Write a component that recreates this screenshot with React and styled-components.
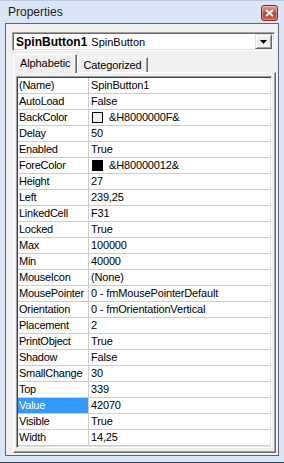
import React from 'react';
import styled, { createGlobalStyle } from 'styled-components';

const GlobalStyle = createGlobalStyle`
  html, body {
    margin: 0;
    padding: 0;
    background: #dae6f5;
  }
  body {
    font-family: "Liberation Sans", Arial, sans-serif;
  }
`;

const props = [
  { name: '(Name)', value: 'SpinButton1' },
  { name: 'AutoLoad', value: 'False' },
  { name: 'BackColor', value: '&H8000000F&', swatch: '#f0f0f0' },
  { name: 'Delay', value: '50' },
  { name: 'Enabled', value: 'True' },
  { name: 'ForeColor', value: '&H80000012&', swatch: '#000000' },
  { name: 'Height', value: '27' },
  { name: 'Left', value: '239,25' },
  { name: 'LinkedCell', value: 'F31' },
  { name: 'Locked', value: 'True' },
  { name: 'Max', value: '100000' },
  { name: 'Min', value: '40000' },
  { name: 'MouseIcon', value: '(None)' },
  { name: 'MousePointer', value: '0 - fmMousePointerDefault' },
  { name: 'Orientation', value: '0 - fmOrientationVertical' },
  { name: 'Placement', value: '2' },
  { name: 'PrintObject', value: 'True' },
  { name: 'Shadow', value: 'False' },
  { name: 'SmallChange', value: '30' },
  { name: 'Top', value: '339' },
  { name: 'Value', value: '42070', selected: true },
  { name: 'Visible', value: 'True' },
  { name: 'Width', value: '14,25' },
];

const Window = styled.div`
  width: 284px;
  height: 463px;
  box-sizing: border-box;
  background: #dae6f5;
  border-top: 1px solid #b9c9de;
  border-bottom: 1px solid #34414f;
  display: flex;
  flex-direction: column;
`;

const TitleBar = styled.div`
  height: 22px;
  display: flex;
  align-items: flex-start;
  justify-content: space-between;
  padding: 0 6px 0 8px;
  flex-shrink: 0;
`;

const Title = styled.span`
  font-size: 12px;
  color: #1a1a1a;
  margin-top: 4px;
`;

const CloseButton = styled.div`
  width: 15px;
  height: 14px;
  margin-top: 4px;
  border: 1px solid #7a2a22;
  border-radius: 3px;
  background: linear-gradient(#e6a08f, #c85a45 45%, #b6402c 55%, #c8634c);
  display: flex;
  align-items: center;
  justify-content: center;
  box-shadow: inset 0 0 0 1px rgba(255, 255, 255, 0.35);
`;

const Client = styled.div`
  flex: 1;
  margin: 0 5px 6px 5px;
  background: #f0f0f0;
  border: 1px solid #5e6670;
  padding: 8px 3px 2px 6px;
  display: flex;
  flex-direction: column;
  min-height: 0;
`;

const Combo = styled.div`
  height: 19px;
  box-sizing: border-box;
  background: #fff;
  border-top: 1px solid #a0a0a0;
  border-left: 1px solid #a0a0a0;
  border-right: 1px solid #fff;
  border-bottom: 1px solid #fff;
  box-shadow: inset 1px 1px 0 #696969, inset -1px -1px 0 #e3e3e3;
  display: flex;
  align-items: center;
  padding: 0 2px 0 3px;
  font-size: 11px;
  color: #000;
`;

const ComboName = styled.b`
  font-size: 12px;
  margin-right: 4px;
`;

const ComboText = styled.span`
  flex: 1;
`;

const DropButton = styled.div`
  width: 17px;
  height: 15px;
  box-sizing: border-box;
  background: #f0f0f0;
  border-top: 1px solid #e3e3e3;
  border-left: 1px solid #e3e3e3;
  border-right: 1px solid #696969;
  border-bottom: 1px solid #696969;
  box-shadow: inset 1px 1px 0 #fff, inset -1px -1px 0 #a0a0a0;
  display: flex;
  align-items: center;
  justify-content: center;
`;

const TabStrip = styled.div`
  display: flex;
  align-items: flex-end;
  height: 18px;
  margin: 3px 0 0 1px;
  position: relative;
  z-index: 1;
`;

const Tab = styled.div`
  box-sizing: border-box;
  height: ${p => (p.$active ? '19px' : '15px')};
  margin-bottom: ${p => (p.$active ? '-1px' : '0')};
  padding: ${p => (p.$active ? '2px 6px 0 6px' : '1px 5px 0 5px')};
  background: #f0f0f0;
  border-top: 1px solid #fff;
  border-left: 1px solid #fff;
  border-right: 1px solid #696969;
  box-shadow: inset -1px 0 0 #a0a0a0;
  font-size: 11px;
  letter-spacing: -0.1px;
  color: #000;
  white-space: nowrap;
`;

const TabPanel = styled.div`
  flex: 1;
  margin: 0 -1px 0 1px;
  box-sizing: border-box;
  border-top: 1px solid #fff;
  border-left: 1px solid #fff;
  border-right: 1px solid #696969;
  border-bottom: 1px solid #696969;
  box-shadow: inset -1px -1px 0 #a0a0a0;
  padding: 3px 3px 0 2px;
  min-height: 0;
`;

const Grid = styled.div`
  box-sizing: border-box;
  width: 256px;
  border-top: 1px solid #a0a0a0;
  border-left: 1px solid #a0a0a0;
  border-right: 1px solid #fff;
  border-bottom: 1px solid #fff;
  box-shadow: inset 1px 1px 0 #404040, inset -1px -1px 0 #e3e3e3;
  padding: 1px;
`;

const Rows = styled.div`
  background: #fff;
  display: grid;
  grid-template-columns: 71px 1fr;
`;

const NameCell = styled.div`
  height: 16px;
  box-sizing: border-box;
  border-bottom: 1px solid #cccccc;
  border-right: 1px solid #cccccc;
  padding-left: 1px;
  font-size: 11px;
  letter-spacing: -0.25px;
  line-height: 15px;
  white-space: nowrap;
  overflow: hidden;
  background: ${p => (p.$selected ? '#3399ff' : '#fff')};
  color: ${p => (p.$selected ? '#fff' : '#000')};
`;

const ValueCell = styled.div`
  height: 16px;
  box-sizing: border-box;
  border-bottom: 1px solid #cccccc;
  padding-left: 2px;
  font-size: 11px;
  letter-spacing: -0.15px;
  line-height: 15px;
  color: #000;
  white-space: nowrap;
  overflow: hidden;
  display: flex;
  align-items: center;
`;

const Swatch = styled.span`
  width: 11px;
  height: 11px;
  box-sizing: border-box;
  border: 1px solid #000;
  background: ${p => p.$color};
  margin: 0 6px 0 1px;
  flex-shrink: 0;
`;

export default function App() {
  return (
    <>
      <GlobalStyle />
      <Window>
        <TitleBar>
          <Title>Properties</Title>
          <CloseButton>
            <svg width="9" height="8" viewBox="0 0 9 8">
              <path d="M1 1 L8 7 M8 1 L1 7" stroke="#fff" strokeWidth="2" />
            </svg>
          </CloseButton>
        </TitleBar>
        <Client>
          <Combo>
            <ComboName>SpinButton1</ComboName>
            <ComboText>SpinButton</ComboText>
            <DropButton>
              <svg width="7" height="4" viewBox="0 0 7 4">
                <path d="M0 0 H7 L3.5 4 Z" fill="#000" />
              </svg>
            </DropButton>
          </Combo>
          <TabStrip>
            <Tab $active>Alphabetic</Tab>
            <Tab>Categorized</Tab>
          </TabStrip>
          <TabPanel>
            <Grid>
              <Rows>
                {props.map(p => (
                  <React.Fragment key={p.name}>
                    <NameCell $selected={p.selected}>{p.name}</NameCell>
                    <ValueCell>
                      {p.swatch && <Swatch $color={p.swatch} />}
                      {p.value}
                    </ValueCell>
                  </React.Fragment>
                ))}
              </Rows>
            </Grid>
          </TabPanel>
        </Client>
      </Window>
    </>
  );
}
